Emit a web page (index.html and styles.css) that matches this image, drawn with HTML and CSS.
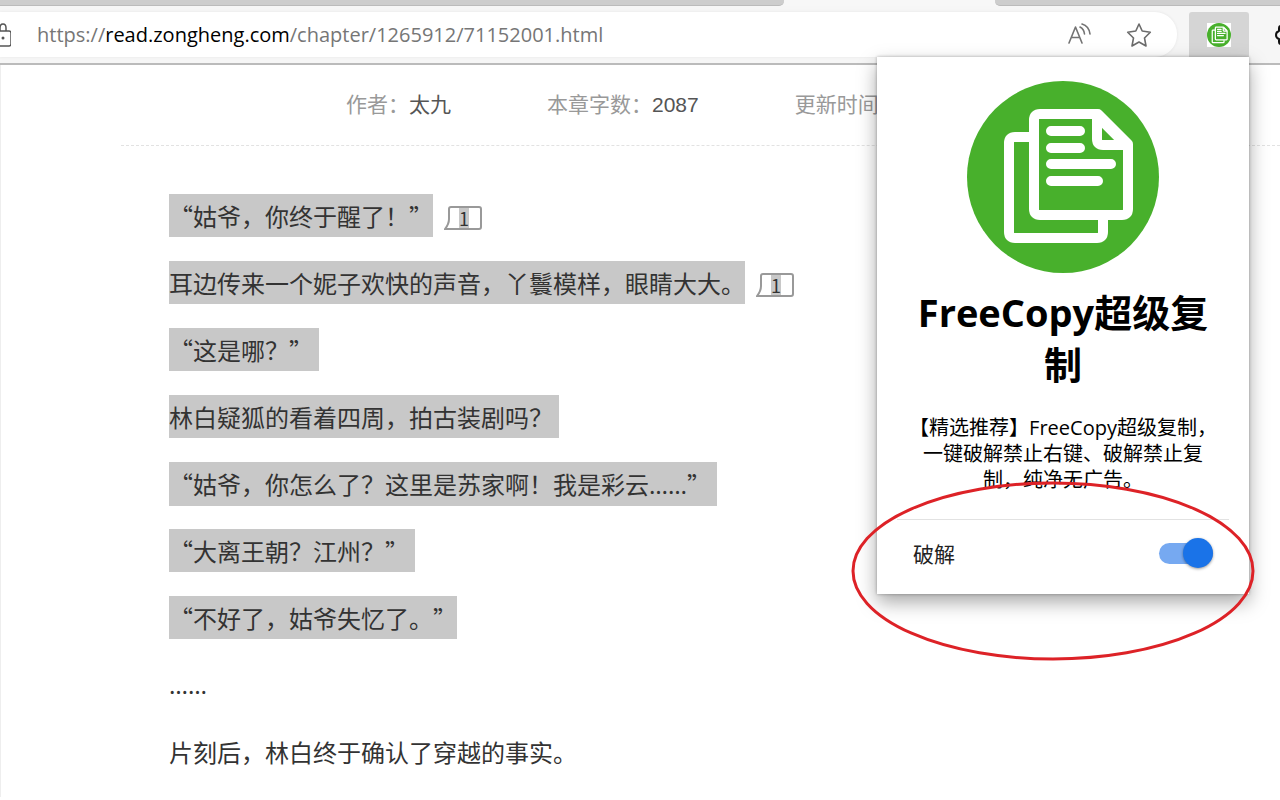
FILE: index.html
```html
<!DOCTYPE html>
<html lang="zh-CN">
<head>
<meta charset="utf-8">
<title>FreeCopy超级复制</title>
<link rel="stylesheet" href="styles.css">
</head>
<body>
<div class="browser">
  <svg class="defs" aria-hidden="true">
    <symbol id="logo" viewBox="0 0 192 192">
      <circle cx="96" cy="96" r="96" fill="#48b02c"/>
      <g fill="none" stroke="#fff" stroke-width="10" stroke-linejoin="round">
        <path d="M66 56H48Q42 56 42 62V151Q42 157 48 157H130Q136 157 136 151V138"/>
        <path d="M73 33H131L161 63V128Q161 134 155 134H73Q67 134 67 128V39Q67 33 73 33Z"/>
        <path d="M130 33V58Q130 64 136 64H161"/>
        <path d="M132 36L158 62" stroke-width="11"/>
        <path d="M84 50H113M84 67H113M84 83H144M84 100H131" stroke-linecap="round"/>
      </g>
    </symbol>
  </svg>

  <div class="tabs">
    <div class="tab tab-left"></div>
    <div class="tab-active"></div>
    <div class="tab tab-right"></div>
  </div>

  <header class="toolbar">
    <div class="address">
      <svg class="lock" viewBox="0 0 20 24" fill="none" stroke="#555" stroke-width="1.500" aria-hidden="true">
        <rect x="1" y="8" width="19" height="15" rx="2"/>
        <path d="M9 8V5Q9 1 12 1T15 5V8"/>
        <circle cx="12" cy="15" r="1.500" fill="#555" stroke="none"/>
      </svg>
      <a class="url" href="#">https://<span class="host">read.zongheng.com</span>/chapter/1265912/71152001.html</a>
      <button class="tool" aria-label="大声朗读">
        <svg width="26" height="26" viewBox="0 0 26 26" fill="none" stroke="#737373" stroke-width="1.600" stroke-linecap="round" stroke-linejoin="round" aria-hidden="true">
          <path d="M3 21L9.500 5L16 21M5.500 15.500H13.500"/>
          <path d="M14 5Q18 7 18.500 12M16 2Q23 4 24 12"/>
        </svg>
      </button>
      <button class="tool" aria-label="收藏">
        <svg width="26" height="26" viewBox="0 0 26 26" fill="none" stroke="#6b6b6b" stroke-width="1.600" stroke-linejoin="round" aria-hidden="true">
          <path d="M13 2L16.200 9L24.300 10.300L18.500 16L20 24L13 20L6 24L7.500 16L1.700 10.300L9.800 9Z"/>
        </svg>
      </button>
    </div>
    <button class="ext" aria-label="FreeCopy超级复制"><svg class="ext-logo" aria-hidden="true"><use href="#logo"/></svg></button>
    <button class="puzzle" aria-label="扩展">
      <svg width="24" height="24" viewBox="0 0 24 24" fill="none" stroke="#111" stroke-width="2" stroke-linejoin="round" aria-hidden="true">
        <path d="M20 3H7Q5 3 5 5V8Q2 9 2 12T5 16V19Q5 21 7 21H20Z"/>
      </svg>
    </button>
  </header>

  <main class="page">
    <div class="meta">
      <span>作者：<a href="#">太九</a></span>
      <span>本章字数：<b class="count">2087</b></span>
      <span>更新时间：</span>
    </div>
    <article class="story">
      <p><mark>“姑爷，你终于醒了！”</mark><button class="note"><svg viewBox="0 0 38 24" aria-hidden="true"><path d="M7 1H35Q37 1 37 3V21Q37 23 35 23H1Q5 18 5 13V3Q5 1 7 1Z"/></svg><span>1</span></button></p>
      <p><mark>耳边传来一个妮子欢快的声音，丫鬟模样，眼睛大大。</mark><button class="note"><svg viewBox="0 0 38 24" aria-hidden="true"><path d="M7 1H35Q37 1 37 3V21Q37 23 35 23H1Q5 18 5 13V3Q5 1 7 1Z"/></svg><span>1</span></button></p>
      <p><mark class="brk">“这是哪？”</mark></p>
      <p><mark class="brk">林白疑狐的看着四周，拍古装剧吗？</mark></p>
      <p><mark class="brk">“姑爷，你怎么了？这里是苏家啊！我是彩云<span class="dots">……</span>”</mark></p>
      <p><mark class="brk">“大离王朝？江州？”</mark></p>
      <p><mark>“不好了，姑爷失忆了。”</mark></p>
      <p><span class="dots">……</span></p>
      <p>片刻后，林白终于确认了穿越的事实。</p>
    </article>
  </main>

  <section class="popup">
    <svg class="popup-logo" aria-hidden="true"><use href="#logo"/></svg>
    <h1>FreeCopy超级复制</h1>
    <p class="desc">【精选推荐】FreeCopy超级复制，<br>一键破解禁止右键、破解禁止复<br>制，纯净无广告。</p>
    <label class="option">破解<input class="switch" type="checkbox" checked></label>
  </section>

  <svg class="ring" viewBox="0 0 404 180" aria-hidden="true"><ellipse cx="202" cy="90" rx="200" ry="88" fill="none" stroke="#dd2227" stroke-width="3"/></svg>
</div>
</body>
</html>
```
FILE: styles.css
```css
* { box-sizing: border-box; }
body {
  margin: 0;
  background: #fff;
  font-family: "Open Sans", "Noto Sans CJK SC", sans-serif;
  text-spacing-trim: space-all;
}
button { border: 0; padding: 0; background: none; font: inherit; color: inherit; }
a { color: inherit; text-decoration: none; }
.browser { position: relative; min-height: 100vh; overflow: hidden; }
.defs { position: absolute; width: 0; height: 0; }

.tabs { display: flex; height: 6px; background: #f7f7f7; }
.tab { background: #cdcdcd; border-bottom: 1px solid #bbb; }
.tab-left { flex: 784; border-bottom-right-radius: 5px; }
.tab-active { flex: 211; }
.tab-right { flex: 285; border-bottom-left-radius: 5px; }

.toolbar {
  display: flex;
  height: 59px;
  padding-top: 6px;
  background: #f6f6f6;
  border-bottom: 2px solid #bbb;
  overflow: hidden;
}
.address {
  flex: 1;
  display: flex;
  align-items: center;
  height: 45px;
  margin-right: 12px;
  padding-right: 25px;
  background: #fff;
  border-radius: 0 22px 22px 0;
  box-shadow: 0 0 3px #e4e4e4;
}
.lock { width: 20px; height: 24px; margin-left: -9px; margin-right: 26px; }
.url { flex: 1; font-size: 20px; line-height: 28px; color: #767676; white-space: nowrap; }
.host { color: #000; }
.tool { display: flex; margin-left: 34px; }
.ext {
  display: grid;
  place-items: center;
  width: 60px;
  height: 45px;
  background: #d5d5d5;
  border-radius: 3px 3px 0 0;
}
.ext-logo { width: 24px; height: 24px; background: #fff; }
.puzzle { display: flex; align-items: center; height: 45px; margin-left: 25px; margin-right: -18px; }

.page { padding-left: 120px; border-left: 1px solid #eee; }
.meta {
  display: flex;
  gap: 96px;
  height: 81px;
  padding: 24px 0 0 225px;
  border-bottom: 1px dashed #e2e2e2;
  font: 21px/28px "Noto Sans CJK SC", sans-serif;
  color: #999;
  white-space: nowrap;
}
.meta a, .count { color: #555; font-weight: 400; }
.count { font-family: "Liberation Sans", sans-serif; }

.story {
  display: flex;
  flex-direction: column;
  gap: 24px;
  padding: 48px 0 24px 48px;
  font: 24px/43px "Noto Sans CJK SC", sans-serif;
  color: #333;
}
.story p { display: flex; align-items: center; margin: 0; height: 43px; white-space: nowrap; }
mark { display: block; background: #c8c8c8; color: inherit; }
.brk { padding-right: 6px; }
.dots { font-family: "Noto Sans", sans-serif; }
.note { display: grid; place-items: center; width: 38px; height: 24px; margin: 5px 0 0 11px; }
.note svg, .note span { grid-area: 1 / 1; }
.note svg { width: 38px; height: 24px; fill: #fff; stroke: #999; stroke-width: 2; }
.note span { z-index: 1; width: 10px; background: #c8c8c8; font-size: 18px; line-height: 20px; margin-left: 2px; }

.popup {
  position: absolute;
  top: 57px;
  right: 31px;
  width: 372px;
  padding: 24px 20px 0;
  background: #fff;
  box-shadow: 0 8px 18px rgba(0, 0, 0, .35), 0 0 3px rgba(0, 0, 0, .3);
  text-align: center;
  color: #000;
}
.popup-logo { display: block; width: 192px; height: 192px; margin: 0 auto; }
.popup h1 { margin: 13px 16px 0; font-size: 38px; line-height: 52px; font-weight: 700; }
.desc { margin: 25px 8px 0; font-size: 20px; line-height: 26px; white-space: nowrap; }
.option {
  display: flex;
  align-items: center;
  justify-content: space-between;
  height: 75px;
  margin-top: 26px;
  padding: 0 16px 8px;
  border-top: 1px solid #e2e2e2;
  font-size: 21px;
  color: #222;
}
.switch {
  appearance: none;
  display: flex;
  align-items: center;
  justify-content: flex-end;
  width: 54px;
  height: 21px;
  margin: 0;
  border-radius: 11px;
  background: #76a9f1;
}
.switch::before {
  content: "";
  width: 30px;
  height: 30px;
  border-radius: 50%;
  background: #1a73e8;
  box-shadow: 0 1px 3px rgba(0, 0, 0, .4);
}

.ring { position: absolute; top: 481px; right: 25px; width: 404px; height: 180px; pointer-events: none; }
```
